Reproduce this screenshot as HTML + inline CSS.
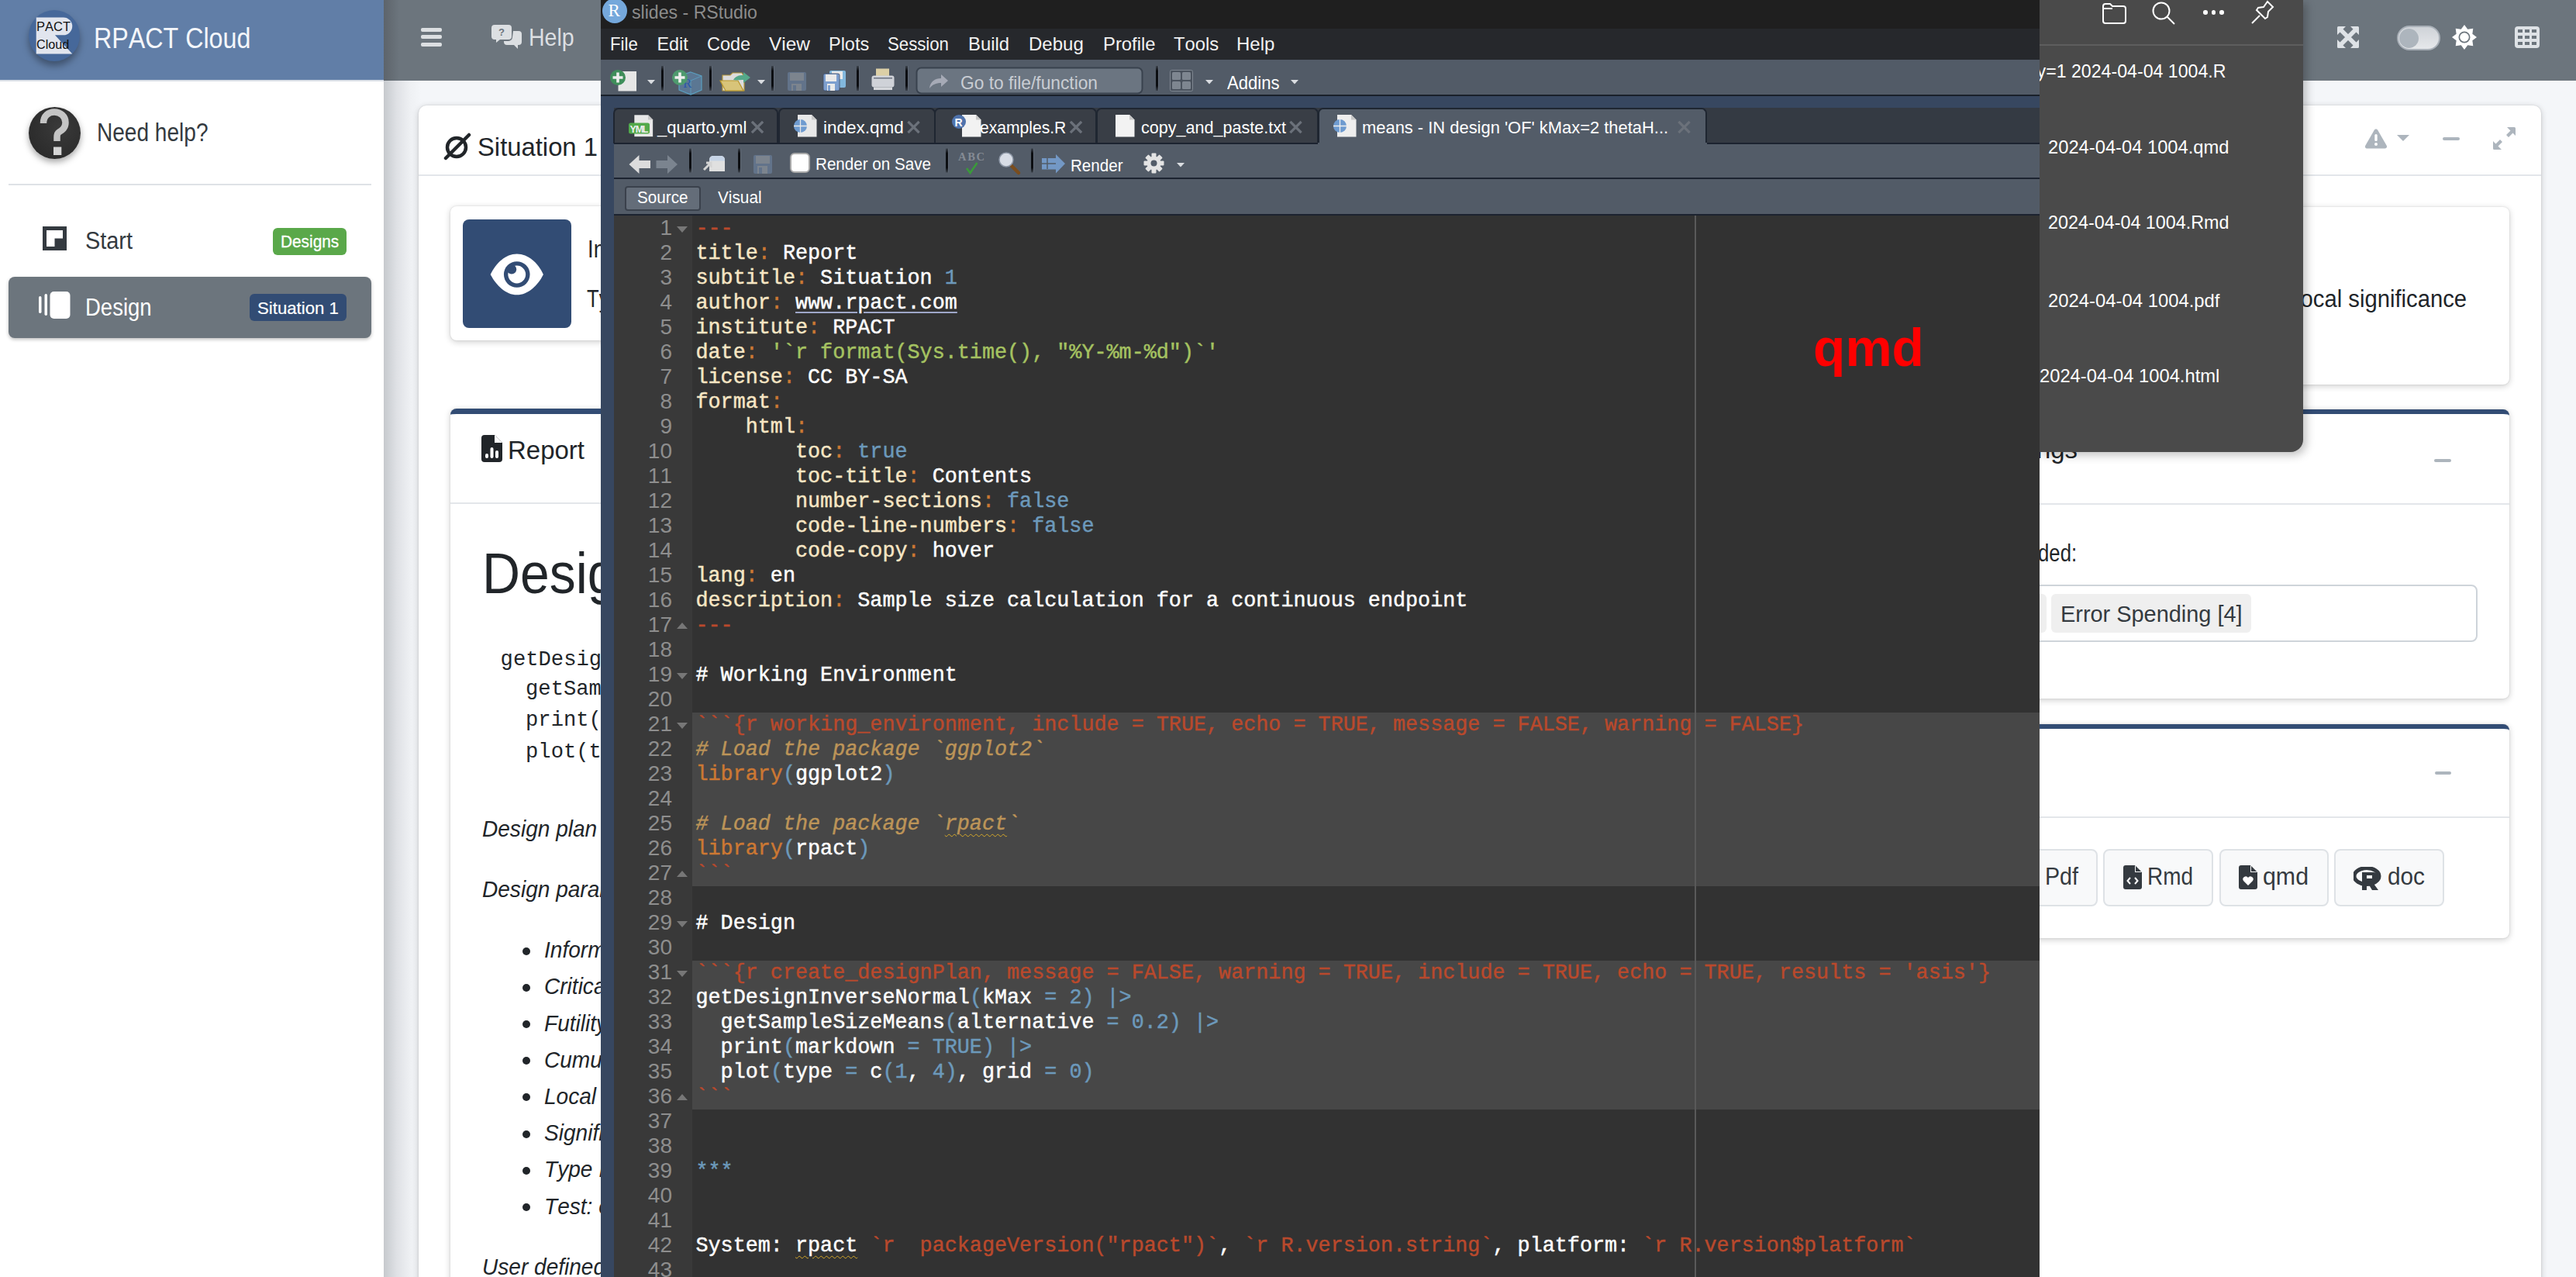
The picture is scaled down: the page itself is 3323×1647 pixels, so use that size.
<!DOCTYPE html>
<html><head><meta charset="utf-8">
<style>
*{box-sizing:border-box;margin:0;padding:0}
html,body{width:3323px;height:1647px;overflow:hidden;background:#f4f6f9;font-family:"Liberation Sans",sans-serif;color:#212529;font-kerning:none}
.a{position:absolute}
.t{position:absolute;white-space:pre;line-height:1;transform-origin:0 0}
.card{position:absolute;background:#fff;border-radius:10px;box-shadow:0 0 2px rgba(0,0,0,.14),0 2px 8px rgba(0,0,0,.2)}
.code{font-family:"Liberation Mono",monospace;font-size:26.78px;line-height:32px;white-space:pre;-webkit-text-stroke:0.45px currentColor}
.code .k{color:#f7e6c4}.code .o{color:#cc7833}.code .w{color:#fff}.code .b{color:#6c99bb}
.code .g{color:#a5c261}.code .r{color:#b9492c}.code .m{color:#bc9458;font-style:italic}
.code .u{color:#fff;text-decoration:underline;text-decoration-color:#9ea7c8;text-underline-offset:4px}
.code .ms{color:#bc9458;font-style:italic;text-decoration:underline wavy #d4a82a;text-decoration-thickness:1px;text-underline-offset:5px}
.code .ws{color:#fff;text-decoration:underline wavy #d4a82a;text-decoration-thickness:1px;text-underline-offset:5px}
.tab{position:absolute;top:139px;height:46px;background:#393e46;border-radius:7px 7px 0 0;border:2px solid #1f2631;border-bottom:none}
.tab.act{background:#535c68}
.fold{position:absolute;width:0;height:0;border-left:7px solid transparent;border-right:7px solid transparent}
.fd{border-top:8px solid #777}
.fu{border-bottom:8px solid #777}
</style></head><body>
<div class="a" style="left:0.0px;top:0.0px;width:495.0px;height:104.0px;background:#617ea7;"></div>
<div class="a" style="left:0.0px;top:104.0px;width:495.0px;height:1543.0px;background:#fff;"></div>
<div class="a" style="left:0.0px;top:103.0px;width:495.0px;height:2.0px;background:#d9dee6;"></div>
<div class="a" style="left:37px;top:13px;width:66px;height:66px;border-radius:50%;background:#46689a;box-shadow:0 6px 10px rgba(0,0,0,.35)"></div>
<svg class="a" style="left:37px;top:13px" width="66" height="66" viewBox="0 0 66 66">
<path d="M9.7 9.4H44.8a11.45 11.45 0 0 1 0 22.9H33.9L56.3 56.6H9.7z" fill="#e1e5ee"/>
</svg>
<div class="t" style="left:46.60px;top:26.14px;font-size:16.30px;color:#111;transform:scaleX(1.0150);">PACT</div>
<div class="t" style="left:46.60px;top:48.64px;font-size:16.30px;color:#111;transform:scaleX(0.9955);">Cloud</div>
<div class="t" style="left:120.50px;top:30.64px;font-size:37.60px;color:#f4f6fa;transform:scaleX(0.8575);">RPACT Cloud</div>
<div class="a" style="left:37px;top:138px;width:67px;height:67px;border-radius:50%;background:radial-gradient(circle at 60% 40%,#3a3a3a,#262626);box-shadow:0 4px 8px rgba(0,0,0,.35)"></div>
<svg class="a" style="left:37px;top:138px" width="67" height="67" viewBox="0 0 67 67">
<path d="M19 21C19 11 26 6.5 33 6.5 41 6.5 47.5 12 47.5 20 47.5 27 43 30 39 32.5 36.5 34 36.5 36 36.5 39V44" fill="none" stroke="#c4c4c4" stroke-width="8.5" stroke-linejoin="round"/>
<rect x="32" y="51.5" width="10.3" height="10.5" fill="#d4d4d4"/>
</svg>
<div class="t" style="left:125.00px;top:155.14px;font-size:32.30px;color:#343a40;transform:scaleX(0.8685);">Need help?</div>
<div class="a" style="left:11.0px;top:237.0px;width:467.5px;height:2.0px;background:#dee2e6;"></div>
<svg class="a" style="left:55px;top:292px" width="31" height="31" viewBox="0 0 31 31">
<rect width="31" height="31" fill="#343a40"/>
<path d="M5 5h21v10.5h-10.5v10.5H5z" fill="#fff"/>
</svg>
<div class="t" style="left:110.00px;top:294.69px;font-size:30.60px;color:#343a40;transform:scaleX(0.9439);">Start</div>
<div class="a" style="left:352.4px;top:294.1px;width:94.5px;height:34.7px;background:#5aa84a;border-radius:6px"></div>
<div class="t" style="left:362.30px;top:301.09px;font-size:22.60px;color:#fff;transform:scaleX(0.9210);-webkit-text-stroke:0.35px #fff;">Designs</div>
<div class="a" style="left:11.3px;top:357.0px;width:467.3px;height:79.0px;background:#6c757d;border-radius:8px;box-shadow:0 2px 4px rgba(0,0,0,.25)"></div>
<svg class="a" style="left:50px;top:376px" width="41" height="35" viewBox="0 0 41 35">
<rect x="0" y="6" width="3.5" height="22" rx="1.7" fill="#fff"/>
<rect x="7.5" y="3" width="3.5" height="28" rx="1.7" fill="#fff"/>
<rect x="14.5" y="0" width="26" height="35" rx="5" fill="#fff"/>
</svg>
<div class="t" style="left:110.00px;top:381.35px;font-size:31.00px;color:#fff;transform:scaleX(0.8871);">Design</div>
<div class="a" style="left:321.8px;top:379.3px;width:125.0px;height:34.7px;background:#324c74;border-radius:6px"></div>
<div class="t" style="left:332.00px;top:386.56px;font-size:22.40px;color:#fff;transform:scaleX(0.9919);-webkit-text-stroke:0.2px #fff;">Situation 1</div>
<div class="a" style="left:495.0px;top:0.0px;width:2828.0px;height:104.0px;background:#6c757d;"></div>
<div class="a" style="left:495.0px;top:0.0px;width:20.0px;height:104.0px;background:linear-gradient(90deg,#5d646b,#6c757d);"></div>
<div class="a" style="left:543.0px;top:36.0px;width:27.0px;height:4.5px;background:#dcdfe2;border-radius:2px"></div>
<div class="a" style="left:543.0px;top:45.3px;width:27.0px;height:4.5px;background:#dcdfe2;border-radius:2px"></div>
<div class="a" style="left:543.0px;top:55.0px;width:27.0px;height:4.5px;background:#dcdfe2;border-radius:2px"></div>
<svg class="a" style="left:634px;top:32px" width="40" height="32" viewBox="0 0 40 32">
<path d="M4 0h18a4 4 0 0 1 4 4v11a4 4 0 0 1-4 4H11l-5 4 0-4H4a4 4 0 0 1-4-4V4a4 4 0 0 1 4-4z" fill="#dcdfe2"/>
<path d="M28 8h7a4 4 0 0 1 4 4v10a4 4 0 0 1-4 4h-1l0 5-5-5h-9a4 4 0 0 1-4-4v-1h6a5 5 0 0 0 5-5z" fill="#dcdfe2"/>
<text x="9" y="14" font-family="Liberation Sans" font-weight="bold" font-size="13" fill="#6c757d">?</text>
</svg>
<div class="t" style="left:681.80px;top:32.51px;font-size:31.40px;color:#dcdfe2;transform:scaleX(0.9089);">Help</div>
<svg class="a" style="left:3015px;top:34px" width="28" height="28" viewBox="0 0 28 28" fill="#dee2e6">
<path d="M5 5L23 23M23 5L5 23" stroke="#dee2e6" stroke-width="5.5"/>
<path d="M1.5 0h9.5L0 11V1.5A1.5 1.5 0 0 1 1.5 0z"/>
<path d="M26.5 0H17l11 11V1.5A1.5 1.5 0 0 0 26.5 0z"/>
<path d="M1.5 28h9.5L0 17v9.5A1.5 1.5 0 0 0 1.5 28z"/>
<path d="M26.5 28H17l11-11v9.5a1.5 1.5 0 0 1-1.5 1.5z"/>
</svg>
<div class="a" style="left:3091.5px;top:33px;width:56.5px;height:32px;border-radius:16px;background:linear-gradient(180deg,#cfd3d8,#e6e8eb);border:2px solid #a9b0b8"></div>
<div class="a" style="left:3095px;top:36.5px;width:25px;height:25px;border-radius:50%;background:#adb5bd"></div>
<svg class="a" style="left:3163px;top:32px" width="32" height="32" viewBox="-16 -16 32 32">
<polygon fill="#fff" points="0.00,-16.00 4.29,-10.35 11.31,-11.31 10.35,-4.29 16.00,0.00 10.35,4.29 11.31,11.31 4.29,10.35 0.00,16.00 -4.29,10.35 -11.31,11.31 -10.35,4.29 -16.00,0.00 -10.35,-4.29 -11.31,-11.31 -4.29,-10.35"/>
<circle r="7.5" fill="#6c757d"/><circle r="5.8" fill="#fff"/>
</svg>
<svg class="a" style="left:3244px;top:34px" width="32" height="28" viewBox="0 0 32 28">
<rect width="32" height="28" rx="4" fill="#dee2e6"/>
<g fill="#6c757d">
<rect x="4" y="4" width="6" height="4"/><rect x="13" y="4" width="6" height="4"/><rect x="22" y="4" width="6" height="4"/>
<rect x="4" y="12" width="6" height="4"/><rect x="13" y="12" width="6" height="4"/><rect x="22" y="12" width="6" height="4"/>
<rect x="4" y="20" width="6" height="4"/><rect x="13" y="20" width="6" height="4"/><rect x="22" y="20" width="6" height="4"/>
</g></svg>
<div class="a" style="left:495.0px;top:104.0px;width:2828.0px;height:1543.0px;background:#f4f6f9;"></div>
<div class="a" style="left:495.0px;top:104.0px;width:48.0px;height:1543.0px;background:linear-gradient(90deg,#c6c9cd,#dfe1e5 35%,#eef0f3 70%,#f4f6f9);"></div>
<div class="card" style="left:540px;top:136px;width:2738px;height:1600px"></div>
<div class="a" style="left:540.0px;top:225.0px;width:2738.0px;height:2.0px;background:#e3e6ea;"></div>
<svg class="a" style="left:572px;top:171px" width="36" height="36" viewBox="0 0 36 36">
<circle cx="17" cy="19" r="12" fill="none" stroke="#212529" stroke-width="4.5"/>
<path d="M3 33L33 3" stroke="#212529" stroke-width="4.5" stroke-linecap="round"/>
</svg>
<div class="t" style="left:615.70px;top:172.61px;font-size:33.40px;color:#212529;transform:scaleX(0.9820);">Situation 1</div>
<svg class="a" style="left:3051px;top:166px" width="60" height="26" viewBox="0 0 60 26">
<path d="M14 0.5c1 0 1.7.5 2.2 1.3l11.5 20c1 1.8-.2 3.7-2.2 3.7H2.5c-2 0-3.2-1.9-2.2-3.7l11.5-20C12.3 1 13 .5 14 .5z" fill="#adb5bd"/>
<rect x="12.3" y="7" width="3.4" height="9" rx="1.5" fill="#fff"/><circle cx="14" cy="20" r="2" fill="#fff"/>
<path d="M41 8h16l-8 8z" fill="#adb5bd"/>
</svg>
<div class="a" style="left:3151.0px;top:176.5px;width:22.0px;height:4.0px;background:#adb5bd;border-radius:2px"></div>
<svg class="a" style="left:3216px;top:164px" width="29" height="29" viewBox="0 0 29 29" fill="#adb5bd">
<path d="M18 0h9.5a1.5 1.5 0 0 1 1.5 1.5V11l-3.5-3.5-5.5 5.5-3-3 5.5-5.5z"/>
<path d="M11 29H1.5A1.5 1.5 0 0 1 0 27.5V18l3.5 3.5 5.5-5.5 3 3-5.5 5.5z"/>
</svg>
<div class="card" style="left:581px;top:266px;width:1200px;height:173px;border-radius:8px"></div>
<div class="a" style="left:597.0px;top:283.0px;width:140.0px;height:140.0px;background:#324c74;border-radius:8px"></div>
<svg class="a" style="left:632px;top:327px" width="70" height="54" viewBox="0 0 70 54">
<path d="M0.7 26.9C8 12 20 0.4 34.8 0.4S62 12 68.9 26.9C62 41 49 53.3 34.8 53.3S8 41 0.7 26.9z" fill="#fff"/>
<circle cx="34.75" cy="27" r="16.8" fill="#324c74"/><circle cx="34.75" cy="27" r="11.4" fill="#fff"/>
<circle cx="28" cy="20.4" r="6.2" fill="#324c74"/>
</svg>
<div class="t" style="left:757.50px;top:305.57px;font-size:30.50px;color:#212529;transform:scaleX(0.9000);">Information rates</div>
<div class="t" style="left:757.00px;top:370.07px;font-size:30.50px;color:#212529;transform:scaleX(0.8400);">Type of design</div>
<div class="card" style="left:1900px;top:267px;width:1337px;height:229px;border-radius:8px"></div>
<div class="t" style="left:2817.83px;top:370.35px;font-size:31.00px;color:#212529;transform:scaleX(0.9433);">Two-sided local significance</div>
<div class="card" style="left:581px;top:527px;width:1300px;height:1200px;border-top:7px solid #324c74;border-radius:8px"></div>
<div class="a" style="left:581.0px;top:648.0px;width:1300.0px;height:2.0px;background:#e3e6ea;"></div>
<svg class="a" style="left:621px;top:561px" width="27" height="35" viewBox="0 0 27 35">
<path d="M4 0h13l10 10v21a4 4 0 0 1-4 4H4a4 4 0 0 1-4-4V4a4 4 0 0 1 4-4z" fill="#212529"/>
<path d="M17 0v10h10" fill="#fff"/><path d="M18 .5v8.5h8.5" fill="#212529" opacity="0"/>
<rect x="5" y="24" width="4" height="6" rx="2" fill="#fff"/><rect x="11.5" y="16" width="4" height="14" rx="2" fill="#fff"/><rect x="18" y="20" width="4" height="10" rx="2" fill="#fff"/>
</svg>
<div class="t" style="left:655.00px;top:562.50px;font-size:34.00px;color:#212529;transform:scaleX(0.9701);">Report</div>
<div class="t" style="left:622.30px;top:703.10px;font-size:74.00px;color:#212529;transform:scaleX(0.9173);">Design</div>
<div class="t" style="left:645.60px;top:836.83px;font-size:27.20px;color:#212529;font-family:'Liberation Mono';">getDesignInverseNormal(kMax = 2) |&gt;</div>
<div class="t" style="left:678.00px;top:875.33px;font-size:27.20px;color:#212529;font-family:'Liberation Mono';">getSampleSizeMeans(alternative = 0.2) |&gt;</div>
<div class="t" style="left:678.00px;top:915.33px;font-size:27.20px;color:#212529;font-family:'Liberation Mono';">print(markdown = TRUE) |&gt;</div>
<div class="t" style="left:678.00px;top:955.83px;font-size:27.20px;color:#212529;font-family:'Liberation Mono';">plot(type = c(1, 4), grid = 0)</div>
<div class="t" style="left:621.80px;top:1053.57px;font-size:29.80px;color:#212529;font-style:italic;transform:scaleX(0.9416);">Design plan parameters and output for inverse normal combination test design</div>
<div class="t" style="left:621.80px;top:1132.47px;font-size:29.80px;color:#212529;font-style:italic;transform:scaleX(0.9416);">Design parameters</div>
<div class="a" style="left:674px;top:1221.5px;width:10px;height:10px;border-radius:50%;background:#212529"></div>
<div class="t" style="left:701.50px;top:1210.17px;font-size:29.80px;color:#212529;font-style:italic;transform:scaleX(0.9416);">Information rates</div>
<div class="a" style="left:674px;top:1268.7px;width:10px;height:10px;border-radius:50%;background:#212529"></div>
<div class="t" style="left:701.50px;top:1257.37px;font-size:29.80px;color:#212529;font-style:italic;transform:scaleX(0.9416);">Critical values</div>
<div class="a" style="left:674px;top:1315.9px;width:10px;height:10px;border-radius:50%;background:#212529"></div>
<div class="t" style="left:701.50px;top:1304.57px;font-size:29.80px;color:#212529;font-style:italic;transform:scaleX(0.9416);">Futility bounds (binding)</div>
<div class="a" style="left:674px;top:1363.1px;width:10px;height:10px;border-radius:50%;background:#212529"></div>
<div class="t" style="left:701.50px;top:1351.77px;font-size:29.80px;color:#212529;font-style:italic;transform:scaleX(0.9416);">Cumulative alpha spending</div>
<div class="a" style="left:674px;top:1410.3px;width:10px;height:10px;border-radius:50%;background:#212529"></div>
<div class="t" style="left:701.50px;top:1398.97px;font-size:29.80px;color:#212529;font-style:italic;transform:scaleX(0.9416);">Local one-sided significance levels</div>
<div class="a" style="left:674px;top:1457.5px;width:10px;height:10px;border-radius:50%;background:#212529"></div>
<div class="t" style="left:701.50px;top:1446.17px;font-size:29.80px;color:#212529;font-style:italic;transform:scaleX(0.9416);">Significance level</div>
<div class="a" style="left:674px;top:1504.7px;width:10px;height:10px;border-radius:50%;background:#212529"></div>
<div class="t" style="left:701.50px;top:1493.37px;font-size:29.80px;color:#212529;font-style:italic;transform:scaleX(0.9416);">Type II error rate</div>
<div class="a" style="left:674px;top:1551.9px;width:10px;height:10px;border-radius:50%;background:#212529"></div>
<div class="t" style="left:701.50px;top:1540.57px;font-size:29.80px;color:#212529;font-style:italic;transform:scaleX(0.9416);">Test: one-sided</div>
<div class="t" style="left:621.80px;top:1618.67px;font-size:29.80px;color:#212529;font-style:italic;transform:scaleX(0.9416);">User defined parameters</div>
<div class="card" style="left:1950px;top:528px;width:1287px;height:373px;border-top:6px solid #324c74;border-radius:8px"></div>
<div class="a" style="left:1950.0px;top:648.5px;width:1287.0px;height:2.0px;background:#e3e6ea;"></div>
<div class="t" style="left:2450.00px;top:562.10px;font-size:34.00px;color:#212529;transform:scaleX(0.9658);">Design Settings</div>
<div class="a" style="left:3140.0px;top:592.0px;width:22.0px;height:4.0px;background:#adb5bd;border-radius:2px"></div>
<div class="t" style="left:2411.94px;top:698.35px;font-size:31.00px;color:#212529;transform:scaleX(0.8287);">Designs to be included:</div>
<div class="a" style="left:1980.0px;top:754.0px;width:1216.0px;height:74.0px;background:#fff;border:2px solid #ced4da;border-radius:8px"></div>
<div class="a" style="left:2400.0px;top:766.4px;width:240.0px;height:50.0px;background:#efefef;border-radius:6px"></div>
<div class="a" style="left:2646.0px;top:766.4px;width:257.5px;height:50.0px;background:#efefef;border-radius:6px"></div>
<div class="t" style="left:2657.80px;top:776.50px;font-size:30.00px;color:#343a40;transform:scaleX(0.9635);">Error Spending [4]</div>
<div class="card" style="left:1950px;top:934px;width:1287px;height:276px;border-top:6px solid #324c74;border-radius:8px"></div>
<div class="a" style="left:1950.0px;top:1053.0px;width:1287.0px;height:2.0px;background:#e3e6ea;"></div>
<div class="a" style="left:3140.5px;top:995.0px;width:21.5px;height:4.0px;background:#adb5bd;border-radius:2px"></div>
<div class="a" style="left:2560.0px;top:1095.4px;width:146.4px;height:73.2px;background:#f8f9fa;border:2px solid #dee2e6;border-radius:8px"></div>
<div class="a" style="left:2713.0px;top:1095.4px;width:142.4px;height:73.2px;background:#f8f9fa;border:2px solid #dee2e6;border-radius:8px"></div>
<div class="a" style="left:2862.7px;top:1095.4px;width:141.3px;height:73.2px;background:#f8f9fa;border:2px solid #dee2e6;border-radius:8px"></div>
<div class="a" style="left:3011.0px;top:1095.4px;width:142.4px;height:73.2px;background:#f8f9fa;border:2px solid #dee2e6;border-radius:8px"></div>
<div class="t" style="left:2638.00px;top:1114.65px;font-size:31.00px;color:#343a40;transform:scaleX(0.9241);">Pdf</div>
<div class="t" style="left:2770.00px;top:1114.65px;font-size:31.00px;color:#343a40;transform:scaleX(0.9014);">Rmd</div>
<div class="t" style="left:2919.00px;top:1114.65px;font-size:31.00px;color:#343a40;transform:scaleX(0.9783);">qmd</div>
<div class="t" style="left:3080.00px;top:1114.65px;font-size:31.00px;color:#343a40;transform:scaleX(0.9603);">doc</div>
<svg class="a" style="left:2739px;top:1116px" width="24" height="31" viewBox="0 0 24 31">
<path d="M3 0h12l9 9v19a3 3 0 0 1-3 3H3a3 3 0 0 1-3-3V3a3 3 0 0 1 3-3z" fill="#343a40"/><path d="M15 0v9h9z" fill="#f8f9fa"/><path d="M16 1v7h7" fill="#343a40"/>
<path d="M9 16l-3.5 4 3.5 4M15 16l3.5 4-3.5 4" stroke="#fff" stroke-width="2" fill="none"/>
</svg>
<svg class="a" style="left:2888px;top:1116px" width="24" height="31" viewBox="0 0 24 31">
<path d="M3 0h12l9 9v19a3 3 0 0 1-3 3H3a3 3 0 0 1-3-3V3a3 3 0 0 1 3-3z" fill="#343a40"/><path d="M15 0v9h9z" fill="#f8f9fa"/><path d="M16 1v7h7" fill="#343a40"/>
<path d="M12 26l-6-6a3.3 3.3 0 0 1 6-4 3.3 3.3 0 0 1 6 4z" fill="#fff"/>
</svg>
<svg class="a" style="left:3036px;top:1118px" width="37" height="30" viewBox="0 0 37 30">
<ellipse cx="17" cy="12" rx="16" ry="10.5" fill="none" stroke="#343a40" stroke-width="5"/>
<path d="M11 7h15a6 6 0 0 1 0 12h-2l8 11h-8l-6-10h-1v10h-6z" fill="#343a40"/><rect x="17" y="11" width="7" height="4" fill="#f8f9fa"/>
</svg>
<div class="a" style="left:775.0px;top:0.0px;width:1856.0px;height:1647.0px;background:#374760;"></div>
<div class="a" style="left:775.0px;top:0.0px;width:1856.0px;height:37.0px;background:#1f1f1f;"></div>
<div class="a" style="left:777px;top:-2px;width:32px;height:32px;border-radius:50%;background:#75a8db"></div>
<div class="t" style="left:784.50px;top:1.51px;font-size:23.00px;color:#fff;font-family:'Liberation Serif';">R</div>
<div class="t" style="left:814.60px;top:4.41px;font-size:24.70px;color:#8c8c8c;transform:scaleX(0.9365);">slides - RStudio</div>
<div class="a" style="left:775.0px;top:37.0px;width:1856.0px;height:40.0px;background:#26282c;"></div>
<div class="t" style="left:787.20px;top:45.91px;font-size:23.40px;color:#f2f2f2;transform:scaleX(0.9494);">File</div>
<div class="t" style="left:847.40px;top:45.91px;font-size:23.40px;color:#f2f2f2;">Edit</div>
<div class="t" style="left:912.30px;top:45.91px;font-size:23.40px;color:#f2f2f2;transform:scaleX(1.0046);">Code</div>
<div class="t" style="left:992.00px;top:45.91px;font-size:23.40px;color:#f2f2f2;transform:scaleX(1.0438);">View</div>
<div class="t" style="left:1068.50px;top:45.91px;font-size:23.40px;color:#f2f2f2;transform:scaleX(1.0034);">Plots</div>
<div class="t" style="left:1144.70px;top:45.91px;font-size:23.40px;color:#f2f2f2;transform:scaleX(0.9489);">Session</div>
<div class="t" style="left:1249.00px;top:45.91px;font-size:23.40px;color:#f2f2f2;transform:scaleX(1.0185);">Build</div>
<div class="t" style="left:1327.00px;top:45.91px;font-size:23.40px;color:#f2f2f2;transform:scaleX(1.0282);">Debug</div>
<div class="t" style="left:1423.20px;top:45.91px;font-size:23.40px;color:#f2f2f2;transform:scaleX(1.0176);">Profile</div>
<div class="t" style="left:1514.00px;top:45.91px;font-size:23.40px;color:#f2f2f2;transform:scaleX(1.0160);">Tools</div>
<div class="t" style="left:1595.20px;top:45.91px;font-size:23.40px;color:#f2f2f2;transform:scaleX(1.0244);">Help</div>
<div class="a" style="left:775.0px;top:77.0px;width:1856.0px;height:46.0px;background:#525b67;"></div>
<div class="a" style="left:775.0px;top:122.0px;width:1856.0px;height:2.0px;background:#1a202a;"></div>
<svg class="a" style="left:775px;top:77px" width="1000" height="46" viewBox="0 77 1000 46">
<defs><linearGradient id="sepg" x1="0" y1="0" x2="0" y2="1"><stop offset="0" stop-color="#0c0e12" stop-opacity=".3"/><stop offset=".2" stop-color="#0c0e12"/><stop offset=".8" stop-color="#0c0e12"/><stop offset="1" stop-color="#0c0e12" stop-opacity=".3"/></linearGradient></defs>
 <!-- coordinates relative to rstudio left (775) -->
 <!-- new file -->
 <rect x="22.5" y="92" width="23.5" height="25.5" fill="#e6e6e6"/>
 <circle cx="22" cy="100" r="10" fill="#3f8e5a"/>
 <path d="M22 93.5v13M15.5 100h13" stroke="#eee" stroke-width="3.6"/>
 <path d="M60 103l5 5.5 5-5.5z" fill="#dadde1"/>
 <!-- project -->
 <path d="M116 93l14 5v18l-14 6-15-6V98z" fill="#5d7b98" stroke="#5ba6c9" stroke-width="1.2" opacity=".9"/>
 <path d="M101 98l15 6 14-6M116 104v18" stroke="#5ba6c9" stroke-width="1" fill="none" opacity=".7"/>
 <text x="106" y="113" font-family="Liberation Serif" font-size="17" fill="#2d57a8">R</text>
 <circle cx="102" cy="100" r="10" fill="#4e9a6e"/>
 <path d="M102 93.5v13M95.5 100h13" stroke="#eee" stroke-width="3.6"/>
 <!-- folder -->
 <path d="M157 97h10l3-3h12l3 5v18h-28z" fill="#dcdcdc" stroke="#b89a3c" stroke-width="1.2"/>
 <path d="M154 104h23l7 13h-23z" fill="#d8c479" stroke="#b8962a" stroke-width="1.2"/>
 <path d="M171 103c3-5 7-6 13-6v-4l9 7-9 7v-4c-5 0-9 1-13 0z" fill="#55a889"/>
 <path d="M202 103l5 5.5 5-5.5z" fill="#dadde1"/>
 <!-- save disabled -->
 <rect x="241" y="93" width="24" height="24" rx="2" fill="#62738a"/>
 <rect x="244" y="94" width="18" height="10" fill="#7c848e"/>
 <rect x="246" y="108" width="13" height="9" fill="#7c848e"/><rect x="248" y="110" width="4" height="7" fill="#62738a"/>
 <!-- save all -->
 <rect x="295" y="91" width="21" height="22" rx="2" fill="#82b8dd"/>
 <rect x="298" y="92" width="14" height="10" fill="#eaeaea"/>
 <rect x="287" y="95" width="21" height="22" rx="2" fill="#7d9fcf" stroke="#3c4a63" stroke-width="0.8"/>
 <rect x="290" y="96" width="14" height="9" fill="#eaeaea"/>
 <rect x="292" y="108" width="10" height="9" fill="#eaeaea"/><rect x="293" y="110" width="3" height="7" fill="#7d9fcf"/>
 <!-- printer -->
 <rect x="355" y="88.5" width="17" height="13" fill="#dccfa6"/>
 <rect x="349.5" y="97.5" width="29" height="15" rx="3" fill="#cfd2d8"/>
 <rect x="352" y="100" width="24" height="1.5" fill="#6c7280"/>
 <rect x="352" y="112.5" width="24" height="3.5" fill="#d6d8dc"/>
 <!-- separators -->
 <rect x="78" y="85" width="3" height="32" fill="url(#sepg)"/><rect x="81.0" y="85" width="1" height="32" fill="#6a7380" opacity=".6"/>
 <rect x="140" y="85" width="3" height="32" fill="url(#sepg)"/><rect x="143.0" y="85" width="1" height="32" fill="#6a7380" opacity=".6"/>
 <rect x="220" y="85" width="3" height="32" fill="url(#sepg)"/><rect x="223.0" y="85" width="1" height="32" fill="#6a7380" opacity=".6"/>
 <rect x="330" y="85" width="3" height="32" fill="url(#sepg)"/><rect x="333.0" y="85" width="1" height="32" fill="#6a7380" opacity=".6"/>
 <rect x="393" y="85" width="3" height="32" fill="url(#sepg)"/><rect x="396.0" y="85" width="1" height="32" fill="#6a7380" opacity=".6"/>
 <rect x="716" y="85" width="3" height="32" fill="url(#sepg)"/><rect x="719.0" y="85" width="1" height="32" fill="#6a7380" opacity=".6"/>
 <!-- goto box -->
 <rect x="407.5" y="87.5" width="291" height="33" rx="6" fill="#6b7581" stroke="#39424e" stroke-width="2"/>
 <path d="M424 114c1-9 7-13 15-13v-5l9 8-9 8v-5c-7 0-11 2-15 7z" fill="#a6aab6"/>
 <!-- grid -->
 <rect x="734.5" y="90.5" width="29" height="27" rx="2" fill="#4a525d" stroke="#7e8690" stroke-width="1"/>
 <rect x="737" y="93" width="11" height="10" rx="1.5" fill="#7e8690"/><rect x="750" y="93" width="11" height="10" rx="1.5" fill="#7e8690"/>
 <rect x="737" y="105" width="11" height="10" rx="1.5" fill="#7e8690"/><rect x="750" y="105" width="11" height="10" rx="1.5" fill="#7e8690"/>
 <path d="M780 103l5 5.5 5-5.5z" fill="#dadde1"/>
 <path d="M890 103l5 5.5 5-5.5z" fill="#dadde1"/>
</svg>
<div class="t" style="left:1239.00px;top:94.90px;font-size:24.00px;color:#c9cdd3;transform:scaleX(0.9477);">Go to file/function</div>
<div class="t" style="left:1583.00px;top:94.90px;font-size:24.00px;color:#fff;transform:scaleX(0.9212);">Addins</div>
<div class="a" style="left:792.0px;top:139.0px;width:1839.0px;height:46.0px;background:#343a43;"></div>
<div class="tab" style="left:791px;width:213px"></div>
<div class="tab" style="left:1004px;width:203px"></div>
<div class="tab" style="left:1205px;width:210px"></div>
<div class="tab" style="left:1414px;width:287px"></div>
<div class="tab act" style="left:1700px;width:502px;border-bottom:none;height:48px"></div>
<svg class="a" style="left:775px;top:139px" width="1500" height="46" viewBox="0 139 1500 46">
 <!-- yml -->
 <path d="M43 148h18l6.5 6.5v22H43z" fill="#e8e8e8" stroke="#2a2f36" stroke-width=".6"/>
 <path d="M61 148v6.5h6.5" fill="#c8c8c8"/>
 <rect x="36" y="158.5" width="27" height="14" rx="2.5" fill="#52a94b"/>
 <text x="37.5" y="170.8" font-family="Liberation Sans" font-weight="bold" font-size="12.5" fill="#eee" textLength="24">YML</text>
 <!-- qmd -->
 <path d="M254 148h18l6.5 6.5v22H254z" fill="#e8e8e8"/>
 <path d="M272 148v6.5h6.5" fill="#c8c8c8"/>
 <circle cx="257.5" cy="162.5" r="8.5" fill="#6e9bd0"/>
 <path d="M257.5 154v17M249 162.5h17" stroke="#e8e8e8" stroke-width="1.3"/>
 <!-- R -->
 <path d="M466 148h18l6.5 6.5v22H466z" fill="#f2f2f2"/>
 <path d="M484 148v6.5h6.5" fill="#c8c8c8"/>
 <circle cx="462" cy="157" r="9" fill="#4f73ad"/>
 <text x="456.5" y="162.5" font-family="Liberation Sans" font-weight="bold" font-size="14" fill="#fff">R</text>
 <!-- txt -->
 <path d="M664 148h18l6.5 6.5v22H664z" fill="#f2f2f2"/>
 <path d="M682 148v6.5h6.5" fill="#c8c8c8"/>
 <!-- means qmd -->
 <path d="M950 148h18l6.5 6.5v22H950z" fill="#eee"/>
 <path d="M968 148v6.5h6.5" fill="#c8c8c8"/>
 <circle cx="953.5" cy="162.5" r="8.5" fill="#6e9bd0"/>
 <path d="M953.5 154v17M945 162.5h17" stroke="#eee" stroke-width="1.3"/>
 <!-- close x -->
 <g stroke="#6b717a" stroke-width="3.2" stroke-linecap="square">
  <path d="M196 158l12 12M208 158l-12 12"/>
  <path d="M397.5 158l12 12M409.5 158l-12 12"/>
  <path d="M607 158l12 12M619 158l-12 12"/>
  <path d="M890.5 158l12 12M902.5 158l-12 12"/>
  <path d="M1391.5 158l12 12M1403.5 158l-12 12"/>
 </g>
</svg>
<div class="t" style="left:848.00px;top:154.29px;font-size:22.60px;color:#fff;transform:scaleX(0.9773);">_quarto.yml</div>
<div class="t" style="left:1061.80px;top:154.29px;font-size:22.60px;color:#fff;transform:scaleX(0.9964);">index.qmd</div>
<div class="t" style="left:1263.70px;top:154.29px;font-size:22.60px;color:#fff;transform:scaleX(0.9327);">examples.R</div>
<div class="t" style="left:1471.70px;top:154.29px;font-size:22.60px;color:#fff;transform:scaleX(0.9545);">copy_and_paste.txt</div>
<div class="t" style="left:1757.40px;top:154.29px;font-size:22.60px;color:#fff;transform:scaleX(0.9700);">means - IN design 'OF' kMax=2 thetaH...</div>
<div class="a" style="left:792.0px;top:184.0px;width:1839.0px;height:47.0px;background:#535c68;border-top:2px solid #1c2330;border-bottom:2px solid #1c2330"></div>
<div class="a" style="left:1700.0px;top:184.0px;width:502.0px;height:2.0px;background:#535c68;"></div>
<svg class="a" style="left:775px;top:185px" width="800" height="46" viewBox="0 185 800 46">
<defs><linearGradient id="sepg" x1="0" y1="0" x2="0" y2="1"><stop offset="0" stop-color="#0c0e12" stop-opacity=".3"/><stop offset=".2" stop-color="#0c0e12"/><stop offset=".8" stop-color="#0c0e12"/><stop offset="1" stop-color="#0c0e12" stop-opacity=".3"/></linearGradient></defs>
 <path d="M36.5 212l13-12v7h14.5v10H49.5v7z" fill="#dcdcdc"/>
 <path d="M99 212l-13-12v7H71.5v10H86v7z" fill="#7b848f"/>
 <rect x="114" y="191.5" width="3" height="31" fill="url(#sepg)"/><rect x="117.0" y="191.5" width="1" height="31" fill="#6a7380" opacity=".6"/>
 <rect x="177" y="191.5" width="3" height="31" fill="url(#sepg)"/><rect x="180.0" y="191.5" width="1" height="31" fill="#6a7380" opacity=".6"/>
 <rect x="445" y="191.5" width="3" height="31" fill="url(#sepg)"/><rect x="448.0" y="191.5" width="1" height="31" fill="#6a7380" opacity=".6"/>
 <rect x="555" y="191.5" width="3" height="31" fill="url(#sepg)"/><rect x="558.0" y="191.5" width="1" height="31" fill="#6a7380" opacity=".6"/>
 <!-- new window -->
 <path d="M140 221v-15a5 5 0 0 1 5-5h10a5 5 0 0 1 5 5v15z" fill="#e0e0e0"/>
 <path d="M140 206a5 5 0 0 1 5-5h10a5 5 0 0 1 5 5v1.5h-20z" fill="#c6d4e6"/>
 <path d="M133 219l8-8M136 210h6v6" stroke="#d4d4d4" stroke-width="3" fill="none"/>
 <!-- save -->
 <rect x="197" y="200" width="24" height="24" rx="2" fill="#62738a"/>
 <rect x="200" y="201" width="18" height="10" fill="#7c848e"/>
 <rect x="202" y="214" width="13" height="10" fill="#7c848e"/><rect x="204" y="216" width="4" height="8" fill="#62738a"/>
 <!-- checkbox -->
 <rect x="245" y="198" width="24" height="24" rx="5" fill="#fff" stroke="#a9a9a9" stroke-width="2"/>
 <!-- abc -->
 <text x="461" y="207" font-family="Liberation Serif" font-weight="bold" font-size="14.5" fill="#858b94" textLength="34">ABC</text>
 <path d="M472 217l4.5 6 9-13" stroke="#3a9a3a" stroke-width="2.6" fill="none"/>
 <!-- magnifier -->
 <path d="M1304 213l10 10" transform="translate(-775 0)" stroke="#7a4d1e" stroke-width="4.5" stroke-linecap="round"/>
 <circle cx="523" cy="206" r="9" fill="#d8dde6" stroke="#8d97a6" stroke-width="1.5"/>
 <!-- render -->
 <path d="M569 204h18v-5l12 12-12 12.5v-5h-18z" fill="#7398c5"/>
 <path d="M576 204v14M569 211h18" stroke="#535c68" stroke-width="1.5"/>
 <!-- gear -->
 <g transform="translate(713.5 210.5)" fill="#e4e4e4">
  <circle r="9"/>
  <g id="tooth"><rect x="-3" y="-13" width="6" height="6" rx="1"/></g>
  <use href="#tooth" transform="rotate(45)"/><use href="#tooth" transform="rotate(90)"/><use href="#tooth" transform="rotate(135)"/>
  <use href="#tooth" transform="rotate(180)"/><use href="#tooth" transform="rotate(225)"/><use href="#tooth" transform="rotate(270)"/><use href="#tooth" transform="rotate(315)"/>
  <circle r="4" fill="#535c68"/>
 </g>
 <path d="M743 210l5 5.5 5-5.5z" fill="#dadde1"/>
</svg>
<div class="t" style="left:1052.40px;top:201.26px;font-size:22.40px;color:#fff;transform:scaleX(0.9204);">Render on Save</div>
<div class="t" style="left:1381.00px;top:202.22px;font-size:22.80px;color:#fff;transform:scaleX(0.9026);">Render</div>
<div class="a" style="left:792.0px;top:231.0px;width:1839.0px;height:47.0px;background:#525b67;border-bottom:2px solid #1c2330"></div>
<div class="a" style="left:806.0px;top:240.0px;width:98.0px;height:32.0px;background:#646d79;border:2px solid #3a414c;border-radius:4px"></div>
<div class="t" style="left:821.70px;top:244.39px;font-size:22.60px;color:#fff;transform:scaleX(0.9147);">Source</div>
<div class="t" style="left:925.60px;top:244.39px;font-size:22.60px;color:#fff;transform:scaleX(0.9191);">Visual</div>
<div class="a" style="left:792.0px;top:278.0px;width:1839.0px;height:1369.0px;background:#323232;"></div>
<div class="a" style="left:792.0px;top:278.0px;width:101.0px;height:1369.0px;background:#393939;"></div>
<div class="a" style="left:893.0px;top:919.0px;width:1738.0px;height:224.0px;background:#474747;"></div>
<div class="a" style="left:893.0px;top:1239.0px;width:1738.0px;height:192.0px;background:#474747;"></div>
<div class="a" style="left:2186.0px;top:278.0px;width:2.0px;height:1369.0px;background:#595959;"></div>
<div class="a code" style="left:792px;top:277.5px;width:75px;text-align:right;color:#8e8e8e;font-family:'Liberation Sans',sans-serif;font-size:28px;-webkit-text-stroke:0">1
2
3
4
5
6
7
8
9
10
11
12
13
14
15
16
17
18
19
20
21
22
23
24
25
26
27
28
29
30
31
32
33
34
35
36
37
38
39
40
41
42
43</div>
<div class="fold fd" style="left:873px;top:292px"></div>
<div class="fold fu" style="left:873px;top:803px"></div>
<div class="fold fd" style="left:873px;top:868px"></div>
<div class="fold fd" style="left:873px;top:932px"></div>
<div class="fold fu" style="left:873px;top:1123px"></div>
<div class="fold fd" style="left:873px;top:1188px"></div>
<div class="fold fd" style="left:873px;top:1252px"></div>
<div class="fold fu" style="left:873px;top:1411px"></div>
<div class="a code" style="left:897.5px;top:279px"><span class="r">---</span>
<span class="k">title</span><span class="o">:</span><span class="w"> Report</span>
<span class="k">subtitle</span><span class="o">:</span><span class="w"> Situation </span><span class="b">1</span>
<span class="k">author</span><span class="o">:</span><span class="w"> </span><span class="u">www.rpact.com</span>
<span class="k">institute</span><span class="o">:</span><span class="w"> RPACT</span>
<span class="k">date</span><span class="o">:</span><span class="w"> </span><span class="g">'`r format(Sys.time(), "%Y-%m-%d")`'</span>
<span class="k">license</span><span class="o">:</span><span class="w"> CC BY-SA</span>
<span class="k">format</span><span class="o">:</span>
<span class="w">    </span><span class="k">html</span><span class="o">:</span>
<span class="w">        </span><span class="k">toc</span><span class="o">:</span><span class="w"> </span><span class="b">true</span>
<span class="w">        </span><span class="k">toc-title</span><span class="o">:</span><span class="w"> Contents</span>
<span class="w">        </span><span class="k">number-sections</span><span class="o">:</span><span class="w"> </span><span class="b">false</span>
<span class="w">        </span><span class="k">code-line-numbers</span><span class="o">:</span><span class="w"> </span><span class="b">false</span>
<span class="w">        </span><span class="k">code-copy</span><span class="o">:</span><span class="w"> hover</span>
<span class="k">lang</span><span class="o">:</span><span class="w"> en</span>
<span class="k">description</span><span class="o">:</span><span class="w"> Sample size calculation for a continuous endpoint</span>
<span class="r">---</span>

<span class="w"># Working Environment</span>

<span class="r">```{r working_environment, include = TRUE, echo = TRUE, message = FALSE, warning = FALSE}</span>
<span class="m"># Load the package `ggplot2`</span>
<span class="o">library</span><span class="b">(</span><span class="w">ggplot2</span><span class="b">)</span>

<span class="m"># Load the package `</span><span class="ms">rpact</span><span class="m">`</span>
<span class="o">library</span><span class="b">(</span><span class="w">rpact</span><span class="b">)</span>
<span class="r">```</span>

<span class="w"># Design</span>

<span class="r">```{r create_designPlan, message = FALSE, warning = TRUE, include = TRUE, echo = TRUE, results = 'asis'}</span>
<span class="w">getDesignInverseNormal</span><span class="b">(</span><span class="w">kMax </span><span class="b">=</span><span class="w"> </span><span class="b">2)</span><span class="w"> </span><span class="b">|&gt;</span>
<span class="w">  getSampleSizeMeans</span><span class="b">(</span><span class="w">alternative </span><span class="b">=</span><span class="w"> </span><span class="b">0.2)</span><span class="w"> </span><span class="b">|&gt;</span>
<span class="w">  print</span><span class="b">(</span><span class="w">markdown </span><span class="b">=</span><span class="w"> </span><span class="b">TRUE)</span><span class="w"> </span><span class="b">|&gt;</span>
<span class="w">  plot</span><span class="b">(</span><span class="w">type </span><span class="b">=</span><span class="w"> c</span><span class="b">(1</span><span class="w">, </span><span class="b">4)</span><span class="w">, grid </span><span class="b">=</span><span class="w"> </span><span class="b">0)</span>
<span class="r">```</span>


<span class="b">***</span>


<span class="w">System: </span><span class="ws">rpact</span><span class="w"> </span><span class="r">`r  packageVersion("rpact")`</span><span class="w">, </span><span class="r">`r R.version.string`</span><span class="w">, platform: </span><span class="r">`r R.version$platform`</span>
</div>
<div class="t" style="left:2338.50px;top:414.35px;font-size:69.00px;color:#ff0000;font-weight:bold;transform:scaleX(0.9818);">qmd</div>
<div class="a" style="left:0;top:0;width:3323px;height:1647px;clip-path:inset(0 0 0 2631px)">
<div class="a" style="left:2631.0px;top:0.0px;width:340.0px;height:583.0px;background:#4a4a4a;border-bottom-right-radius:16px;box-shadow:4px 4px 12px rgba(0,0,0,.25)"></div>
<div class="a" style="left:2631.0px;top:57.0px;width:340.0px;height:2.0px;background:#5e5e5e;"></div>
<svg class="a" style="left:2705px;top:0" width="240" height="40" viewBox="0 0 240 40" fill="none" stroke="#fff" stroke-width="2">
<path d="M8 8a3 3 0 0 1 3-3h6l3 3h14a3 3 0 0 1 3 3v16a3 3 0 0 1-3 3H11a3 3 0 0 1-3-3z"/><path d="M8 11h12"/>
<circle cx="83" cy="14" r="10.5"/><path d="M90.5 21.5l9.5 9.5"/>
<path d="M227 9l-7-7-5 7-7 1-2 3 11 11 3-2 1-7z"/><path d="M210 20l-10 10"/>
</svg>
<div class="a" style="left:2842.2px;top:13px;width:5.5px;height:5.5px;border-radius:50%;background:#fff"></div>
<div class="a" style="left:2852.8px;top:13px;width:5.5px;height:5.5px;border-radius:50%;background:#fff"></div>
<div class="a" style="left:2863.2px;top:13px;width:5.5px;height:5.5px;border-radius:50%;background:#fff"></div>
<div class="t" style="left:2615.53px;top:80.47px;font-size:24.50px;color:#fff;transform:scaleX(0.9449);">ity=1 2024-04-04 1004.R</div>
<div class="t" style="left:2641.50px;top:177.78px;font-size:24.50px;color:#fff;transform:scaleX(0.9684);">2024-04-04 1004.qmd</div>
<div class="t" style="left:2641.50px;top:275.07px;font-size:24.50px;color:#fff;transform:scaleX(0.9524);">2024-04-04 1004.Rmd</div>
<div class="t" style="left:2641.50px;top:375.57px;font-size:24.50px;color:#fff;transform:scaleX(0.9736);">2024-04-04 1004.pdf</div>
<div class="t" style="left:2630.70px;top:472.68px;font-size:24.50px;color:#fff;transform:scaleX(0.9690);">2024-04-04 1004.html</div>
</div>
</body></html>
